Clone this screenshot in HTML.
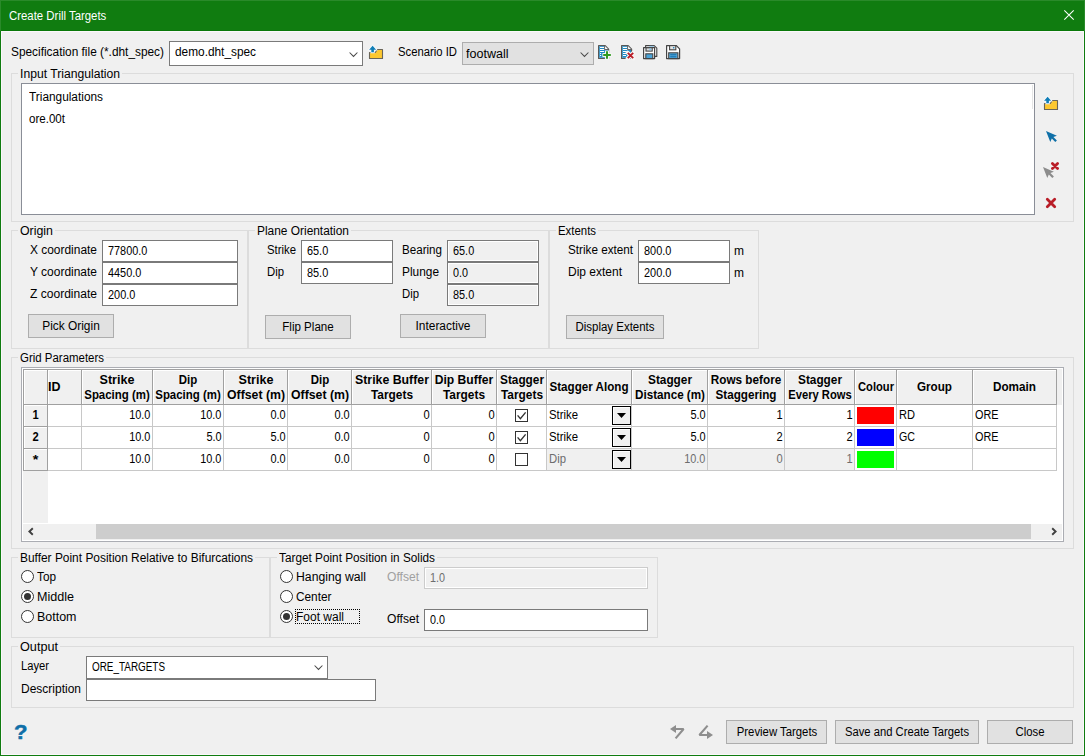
<!DOCTYPE html>
<html><head><meta charset="utf-8"><title>Create Drill Targets</title>
<style>
html,body{margin:0;padding:0;width:1085px;height:756px;overflow:hidden;}
body{background:#f0f0f0;position:relative;
font-family:"Liberation Sans",sans-serif;font-size:12px;color:#000;}
div{position:absolute;box-sizing:border-box;}
.t{white-space:nowrap;line-height:14px;height:14px;transform-origin:0 0;}
svg{position:absolute;overflow:visible;}
</style></head>
<body>
<div style="left:0;top:0;width:1085px;height:756px;overflow:hidden;">
<div style="left:0px;top:0px;width:1085px;height:756px;background:#f0f0f0;border:1px solid #107c10;"></div>
<div style="left:0px;top:0px;width:1085px;height:31px;background:#107c10;"></div>
<div style="left:0px;top:0px;width:1085px;height:1px;background:#2a8a2a;"></div>
<div style="left:0px;top:0px;width:1px;height:31px;background:#2a8a2a;"></div>
<div style="left:1084px;top:0px;width:1px;height:31px;background:#2a8a2a;"></div>
<div style="left:1px;top:30px;width:1083px;height:1px;background:#097809;"></div>
<div style="left:1px;top:31px;width:1083px;height:724px;border:1px solid #fbf8fb;"></div>
<svg style="left:1064px;top:10px" width="10" height="10" viewBox="0 0 10 10"><path d="M0.3 0.3 L9.7 9.7 M9.7 0.3 L0.3 9.7" stroke="#fff" stroke-width="1.05" fill="none"/></svg>
<div style="left:169px;top:41px;width:194px;height:25px;background:#fff;border:1px solid #7a7a7a;"></div>
<svg style="left:349.3px;top:51.5px" width="9" height="6" viewBox="0 0 9 6"><path d="M0.6 0.5 L4.5 4.4 L8.4 0.5" stroke="#484848" stroke-width="1.05" fill="none"/></svg>
<div style="left:462px;top:42px;width:132px;height:23px;background:#e1e1e1;border:1px solid #adadad;"></div>
<svg style="left:580.3px;top:51.5px" width="9" height="6" viewBox="0 0 9 6"><path d="M0.6 0.5 L4.5 4.4 L8.4 0.5" stroke="#484848" stroke-width="1.05" fill="none"/></svg>
<div style="left:11px;top:73px;width:1063px;height:149px;border:1px solid #dcdcdc;"></div>
<div style="left:18px;top:67px;width:104px;height:13px;background:#f0f0f0;"></div>
<div style="left:21px;top:83px;width:1014px;height:132px;background:#fff;border:1px solid #8a8e97;"></div>
<div style="left:1032px;top:85px;width:1px;height:24px;background:#e5e5e5;"></div>
<div style="left:11px;top:230px;width:237px;height:119px;border:1px solid #dcdcdc;"></div>
<div style="left:18px;top:224px;width:37px;height:13px;background:#f0f0f0;"></div>
<div style="left:102px;top:240px;width:136px;height:22px;background:#fff;border:1px solid #7a7a7a;"></div>
<div style="left:102px;top:262px;width:136px;height:22px;background:#fff;border:1px solid #7a7a7a;"></div>
<div style="left:102px;top:284px;width:136px;height:22px;background:#fff;border:1px solid #7a7a7a;"></div>
<div style="left:28px;top:314px;width:86px;height:24px;background:#e1e1e1;border:1px solid #adadad;"></div>
<div style="left:248px;top:230px;width:301px;height:119px;border:1px solid #dcdcdc;"></div>
<div style="left:255px;top:224px;width:96px;height:13px;background:#f0f0f0;"></div>
<div style="left:301px;top:240px;width:92px;height:22px;background:#fff;border:1px solid #7a7a7a;"></div>
<div style="left:301px;top:262px;width:92px;height:22px;background:#fff;border:1px solid #7a7a7a;"></div>
<div style="left:447px;top:240px;width:92px;height:22px;background:#f0f0f0;border:1px solid #7a7a7a;box-shadow:inset 0 0 0 1px #fff;"></div>
<div style="left:447px;top:262px;width:92px;height:22px;background:#f0f0f0;border:1px solid #7a7a7a;box-shadow:inset 0 0 0 1px #fff;"></div>
<div style="left:447px;top:284px;width:92px;height:22px;background:#f0f0f0;border:1px solid #7a7a7a;box-shadow:inset 0 0 0 1px #fff;"></div>
<div style="left:265px;top:315px;width:86px;height:24px;background:#e1e1e1;border:1px solid #adadad;"></div>
<div style="left:400px;top:314px;width:86px;height:24px;background:#e1e1e1;border:1px solid #adadad;"></div>
<div style="left:549px;top:230px;width:210px;height:119px;border:1px solid #dcdcdc;"></div>
<div style="left:556px;top:224px;width:42px;height:13px;background:#f0f0f0;"></div>
<div style="left:638px;top:240px;width:92px;height:22px;background:#fff;border:1px solid #7a7a7a;"></div>
<div style="left:638px;top:262px;width:92px;height:22px;background:#fff;border:1px solid #7a7a7a;"></div>
<div style="left:566px;top:315px;width:98px;height:24px;background:#e1e1e1;border:1px solid #adadad;"></div>
<div style="left:11px;top:357px;width:1063px;height:192px;border:1px solid #dcdcdc;"></div>
<div style="left:18px;top:351px;width:88px;height:13px;background:#f0f0f0;"></div>
<div style="left:21px;top:367px;width:1043px;height:175px;background:#fff;border:1px solid #abadb3;"></div>
<div style="left:23px;top:369px;width:1039px;height:36px;background:#f0f0f0;"></div>
<div style="left:23px;top:405px;width:25px;height:118px;background:#f0f0f0;"></div>
<div style="left:23px;top:369px;width:1034px;height:1px;background:#a0a0a0;"></div>
<div style="left:23px;top:369px;width:1px;height:102px;background:#a0a0a0;"></div>
<div style="left:23px;top:404px;width:1034px;height:1px;background:#a0a0a0;"></div>
<div style="left:48px;top:426px;width:1009px;height:1px;background:#c8c8c8;"></div>
<div style="left:23px;top:426px;width:25px;height:1px;background:#a0a0a0;"></div>
<div style="left:48px;top:448px;width:1009px;height:1px;background:#c8c8c8;"></div>
<div style="left:23px;top:448px;width:25px;height:1px;background:#a0a0a0;"></div>
<div style="left:48px;top:470px;width:1009px;height:1px;background:#c8c8c8;"></div>
<div style="left:23px;top:470px;width:25px;height:1px;background:#a0a0a0;"></div>
<div style="left:47px;top:369px;width:1px;height:36px;background:#a0a0a0;"></div>
<div style="left:47px;top:405px;width:1px;height:66px;background:#a0a0a0;"></div>
<div style="left:24px;top:370px;width:23px;height:1px;background:#fff;"></div>
<div style="left:24px;top:370px;width:1px;height:34px;background:#fff;"></div>
<div style="left:81px;top:369px;width:1px;height:36px;background:#a0a0a0;"></div>
<div style="left:81px;top:405px;width:1px;height:66px;background:#c8c8c8;"></div>
<div style="left:48px;top:370px;width:33px;height:1px;background:#fff;"></div>
<div style="left:48px;top:370px;width:1px;height:34px;background:#fff;"></div>
<div style="left:152px;top:369px;width:1px;height:36px;background:#a0a0a0;"></div>
<div style="left:152px;top:405px;width:1px;height:66px;background:#c8c8c8;"></div>
<div style="left:82px;top:370px;width:70px;height:1px;background:#fff;"></div>
<div style="left:82px;top:370px;width:1px;height:34px;background:#fff;"></div>
<div style="left:223px;top:369px;width:1px;height:36px;background:#a0a0a0;"></div>
<div style="left:223px;top:405px;width:1px;height:66px;background:#c8c8c8;"></div>
<div style="left:153px;top:370px;width:70px;height:1px;background:#fff;"></div>
<div style="left:153px;top:370px;width:1px;height:34px;background:#fff;"></div>
<div style="left:287px;top:369px;width:1px;height:36px;background:#a0a0a0;"></div>
<div style="left:287px;top:405px;width:1px;height:66px;background:#c8c8c8;"></div>
<div style="left:224px;top:370px;width:63px;height:1px;background:#fff;"></div>
<div style="left:224px;top:370px;width:1px;height:34px;background:#fff;"></div>
<div style="left:351px;top:369px;width:1px;height:36px;background:#a0a0a0;"></div>
<div style="left:351px;top:405px;width:1px;height:66px;background:#c8c8c8;"></div>
<div style="left:288px;top:370px;width:63px;height:1px;background:#fff;"></div>
<div style="left:288px;top:370px;width:1px;height:34px;background:#fff;"></div>
<div style="left:431px;top:369px;width:1px;height:36px;background:#a0a0a0;"></div>
<div style="left:431px;top:405px;width:1px;height:66px;background:#c8c8c8;"></div>
<div style="left:352px;top:370px;width:79px;height:1px;background:#fff;"></div>
<div style="left:352px;top:370px;width:1px;height:34px;background:#fff;"></div>
<div style="left:496px;top:369px;width:1px;height:36px;background:#a0a0a0;"></div>
<div style="left:496px;top:405px;width:1px;height:66px;background:#c8c8c8;"></div>
<div style="left:432px;top:370px;width:64px;height:1px;background:#fff;"></div>
<div style="left:432px;top:370px;width:1px;height:34px;background:#fff;"></div>
<div style="left:546px;top:369px;width:1px;height:36px;background:#a0a0a0;"></div>
<div style="left:546px;top:405px;width:1px;height:66px;background:#c8c8c8;"></div>
<div style="left:497px;top:370px;width:49px;height:1px;background:#fff;"></div>
<div style="left:497px;top:370px;width:1px;height:34px;background:#fff;"></div>
<div style="left:631px;top:369px;width:1px;height:36px;background:#a0a0a0;"></div>
<div style="left:631px;top:405px;width:1px;height:66px;background:#c8c8c8;"></div>
<div style="left:547px;top:370px;width:84px;height:1px;background:#fff;"></div>
<div style="left:547px;top:370px;width:1px;height:34px;background:#fff;"></div>
<div style="left:707px;top:369px;width:1px;height:36px;background:#a0a0a0;"></div>
<div style="left:707px;top:405px;width:1px;height:66px;background:#c8c8c8;"></div>
<div style="left:632px;top:370px;width:75px;height:1px;background:#fff;"></div>
<div style="left:632px;top:370px;width:1px;height:34px;background:#fff;"></div>
<div style="left:784px;top:369px;width:1px;height:36px;background:#a0a0a0;"></div>
<div style="left:784px;top:405px;width:1px;height:66px;background:#c8c8c8;"></div>
<div style="left:708px;top:370px;width:76px;height:1px;background:#fff;"></div>
<div style="left:708px;top:370px;width:1px;height:34px;background:#fff;"></div>
<div style="left:854px;top:369px;width:1px;height:36px;background:#a0a0a0;"></div>
<div style="left:854px;top:405px;width:1px;height:66px;background:#c8c8c8;"></div>
<div style="left:785px;top:370px;width:69px;height:1px;background:#fff;"></div>
<div style="left:785px;top:370px;width:1px;height:34px;background:#fff;"></div>
<div style="left:896px;top:369px;width:1px;height:36px;background:#a0a0a0;"></div>
<div style="left:896px;top:405px;width:1px;height:66px;background:#c8c8c8;"></div>
<div style="left:855px;top:370px;width:41px;height:1px;background:#fff;"></div>
<div style="left:855px;top:370px;width:1px;height:34px;background:#fff;"></div>
<div style="left:972px;top:369px;width:1px;height:36px;background:#a0a0a0;"></div>
<div style="left:972px;top:405px;width:1px;height:66px;background:#c8c8c8;"></div>
<div style="left:897px;top:370px;width:75px;height:1px;background:#fff;"></div>
<div style="left:897px;top:370px;width:1px;height:34px;background:#fff;"></div>
<div style="left:1056px;top:369px;width:1px;height:36px;background:#a0a0a0;"></div>
<div style="left:1056px;top:405px;width:1px;height:66px;background:#c8c8c8;"></div>
<div style="left:973px;top:370px;width:83px;height:1px;background:#fff;"></div>
<div style="left:973px;top:370px;width:1px;height:34px;background:#fff;"></div>
<div style="left:24px;top:405px;width:23px;height:1px;background:#fff;"></div>
<div style="left:24px;top:405px;width:1px;height:21px;background:#fff;"></div>
<div style="left:24px;top:427px;width:23px;height:1px;background:#fff;"></div>
<div style="left:24px;top:427px;width:1px;height:21px;background:#fff;"></div>
<div style="left:24px;top:449px;width:23px;height:1px;background:#fff;"></div>
<div style="left:24px;top:449px;width:1px;height:21px;background:#fff;"></div>
<div style="left:515px;top:409px;width:13px;height:13px;background:#fff;border:1px solid #333;"></div>
<svg style="left:515px;top:409px" width="13" height="13" viewBox="0 0 13 13"><path d="M2.6 6.4 L5.4 9.6 L10.6 3.4" stroke="#333" stroke-width="1.4" fill="none"/></svg>
<div style="left:612px;top:406px;width:19px;height:19px;background:#f0f0f0;border:1px solid #000;"></div>
<div style="left:613px;top:407px;width:17px;height:1px;background:#fff;"></div>
<div style="left:613px;top:407px;width:1px;height:17px;background:#fff;"></div>
<svg style="left:617px;top:413px" width="9" height="5" viewBox="0 0 9 5"><path d="M0 0 L9 0 L4.5 5 Z" fill="#000"/></svg>
<div style="left:857px;top:407px;width:37px;height:17px;background:#ff0000;"></div>
<div style="left:515px;top:431px;width:13px;height:13px;background:#fff;border:1px solid #333;"></div>
<svg style="left:515px;top:431px" width="13" height="13" viewBox="0 0 13 13"><path d="M2.6 6.4 L5.4 9.6 L10.6 3.4" stroke="#333" stroke-width="1.4" fill="none"/></svg>
<div style="left:612px;top:428px;width:19px;height:19px;background:#f0f0f0;border:1px solid #000;"></div>
<div style="left:613px;top:429px;width:17px;height:1px;background:#fff;"></div>
<div style="left:613px;top:429px;width:1px;height:17px;background:#fff;"></div>
<svg style="left:617px;top:435px" width="9" height="5" viewBox="0 0 9 5"><path d="M0 0 L9 0 L4.5 5 Z" fill="#000"/></svg>
<div style="left:857px;top:429px;width:37px;height:17px;background:#0000ff;"></div>
<div style="left:515px;top:453px;width:13px;height:13px;background:#fff;border:1px solid #333;"></div>
<div style="left:547px;top:449px;width:84px;height:21px;background:#f0f0f0;"></div>
<div style="left:612px;top:450px;width:19px;height:19px;background:#f0f0f0;border:1px solid #000;"></div>
<div style="left:613px;top:451px;width:17px;height:1px;background:#fff;"></div>
<div style="left:613px;top:451px;width:1px;height:17px;background:#fff;"></div>
<svg style="left:617px;top:457px" width="9" height="5" viewBox="0 0 9 5"><path d="M0 0 L9 0 L4.5 5 Z" fill="#000"/></svg>
<div style="left:632px;top:449px;width:75px;height:21px;background:#f0f0f0;"></div>
<div style="left:708px;top:449px;width:76px;height:21px;background:#f0f0f0;"></div>
<div style="left:785px;top:449px;width:69px;height:21px;background:#f0f0f0;"></div>
<div style="left:857px;top:451px;width:37px;height:17px;background:#00ff00;"></div>
<div style="left:23px;top:524px;width:1039px;height:16px;background:#f0f0f0;"></div>
<div style="left:96px;top:524px;width:935px;height:15px;background:#cdcdcd;"></div>
<svg style="left:27px;top:527px" width="8" height="9" viewBox="0 0 8 9"><path d="M5.8 1.3 L2.4 4.5 L5.8 7.7" stroke="#404040" stroke-width="1.9" fill="none"/></svg>
<svg style="left:1050px;top:527px" width="8" height="9" viewBox="0 0 8 9"><path d="M2.2 1.3 L5.6 4.5 L2.2 7.7" stroke="#404040" stroke-width="1.9" fill="none"/></svg>
<div style="left:11px;top:557px;width:259px;height:81px;border:1px solid #dcdcdc;"></div>
<div style="left:18px;top:551px;width:237px;height:13px;background:#f0f0f0;"></div>
<div style="left:21.0px;top:570.0px;width:13px;height:13px;border:1px solid #333;border-radius:50%;background:#fff;"></div>
<div style="left:21.0px;top:590.0px;width:13px;height:13px;border:1px solid #333;border-radius:50%;background:#fff;"></div>
<div style="left:24.0px;top:593.0px;width:7px;height:7px;border-radius:50%;background:#333;"></div>
<div style="left:21.0px;top:610.0px;width:13px;height:13px;border:1px solid #333;border-radius:50%;background:#fff;"></div>
<div style="left:270px;top:557px;width:388px;height:81px;border:1px solid #dcdcdc;"></div>
<div style="left:277px;top:551px;width:160px;height:13px;background:#f0f0f0;"></div>
<div style="left:280.0px;top:570.0px;width:13px;height:13px;border:1px solid #333;border-radius:50%;background:#fff;"></div>
<div style="left:280.0px;top:590.0px;width:13px;height:13px;border:1px solid #333;border-radius:50%;background:#fff;"></div>
<div style="left:280.0px;top:610.0px;width:13px;height:13px;border:1px solid #333;border-radius:50%;background:#fff;"></div>
<div style="left:283.0px;top:613.0px;width:7px;height:7px;border-radius:50%;background:#333;"></div>
<div style="left:295px;top:609px;width:65px;height:15px;border:1px dotted #000;"></div>
<div style="left:424px;top:567px;width:224px;height:22px;background:#f0f0f0;border:1px solid #cccccc;box-shadow:inset 0 0 0 1px #fff;"></div>
<div style="left:424px;top:609px;width:224px;height:22px;background:#fff;border:1px solid #7a7a7a;"></div>
<div style="left:11px;top:646px;width:1063px;height:62px;border:1px solid #dcdcdc;"></div>
<div style="left:18px;top:640px;width:42px;height:13px;background:#f0f0f0;"></div>
<div style="left:86px;top:656px;width:242px;height:23px;background:#fff;border:1px solid #7a7a7a;"></div>
<svg style="left:314.3px;top:664.5px" width="9" height="6" viewBox="0 0 9 6"><path d="M0.6 0.5 L4.5 4.4 L8.4 0.5" stroke="#484848" stroke-width="1.05" fill="none"/></svg>
<div style="left:86px;top:679px;width:290px;height:22px;background:#fff;border:1px solid #7a7a7a;"></div>
<div style="left:726px;top:720px;width:101px;height:24px;background:#e1e1e1;border:1px solid #adadad;"></div>
<div style="left:835px;top:720px;width:144px;height:24px;background:#e1e1e1;border:1px solid #adadad;"></div>
<div style="left:987px;top:720px;width:86px;height:24px;background:#e1e1e1;border:1px solid #adadad;"></div>
<svg style="left:369px;top:45px" width="16" height="16" viewBox="0 0 16 16"><path d="M0.5 7.5 L6.3 7.5 L8.3 4.5 L13.5 4.5 L13.5 13.5 L0.5 13.5 Z" fill="#fdc830" stroke="#6a6558" stroke-width="1.1" stroke-linejoin="round"/><path d="M3.6 0.2 L7.6 4.9 L5.1 4.9 L5.1 7.6 L2.1 7.6 L2.1 4.9 L-0.4 4.9 Z" fill="#fff" stroke="#f4f8fb" stroke-width="1.2"/><path d="M3.6 0.7 L7.1 4.7 L4.9 4.7 L4.9 7.3 L2.3 7.3 L2.3 4.7 L0.1 4.7 Z" fill="#0f7db6"/></svg>
<svg style="left:598px;top:45px" width="16" height="16" viewBox="0 0 16 16"><path d="M0.6 0.6 L7.2 0.6 L10.6 4.2 L10.6 13.4 L0.6 13.4 Z" fill="#fff" stroke="#585858" stroke-width="1.2" stroke-linejoin="round"/><path d="M1.2 1.2 L6.4 1.2 L6.4 4.8 L10 4.8 L10 12.8 L1.2 12.8 Z" fill="#1f8ac4"/><path d="M6.6 1.0 L6.6 4.5 L10.2 4.5" fill="#fff" stroke="#585858" stroke-width="0.9"/><rect x="2" y="2" width="4" height="1" fill="#fff"/><rect x="2" y="4" width="4" height="1" fill="#fff"/><rect x="2" y="6" width="4" height="1" fill="#fff"/><rect x="2" y="8" width="1.2" height="1" fill="#fff"/><rect x="2" y="10" width="1.2" height="1" fill="#fff"/><path d="M9 5.4 L9 14.6 M4.4 10 L13.6 10" stroke="#f6f6f6" stroke-width="4.2" fill="none"/><path d="M9 6.2 L9 13.8 M5.2 10 L12.8 10" stroke="#2f9a1f" stroke-width="2" fill="none"/></svg>
<svg style="left:621px;top:45px" width="16" height="16" viewBox="0 0 16 16"><path d="M0.6 0.6 L7.2 0.6 L10.6 4.2 L10.6 13.4 L0.6 13.4 Z" fill="#fff" stroke="#585858" stroke-width="1.2" stroke-linejoin="round"/><path d="M1.2 1.2 L6.4 1.2 L6.4 4.8 L10 4.8 L10 12.8 L1.2 12.8 Z" fill="#1f8ac4"/><path d="M6.6 1.0 L6.6 4.5 L10.2 4.5" fill="#fff" stroke="#585858" stroke-width="0.9"/><rect x="2" y="2" width="4" height="1" fill="#fff"/><rect x="2" y="4" width="4" height="1" fill="#fff"/><rect x="2" y="6" width="3.6" height="1" fill="#fff"/><rect x="2" y="8" width="3" height="1" fill="#fff"/><rect x="2" y="10" width="3" height="1" fill="#fff"/><path d="M6.6 7.6 L12.4 13.4 M12.4 7.6 L6.6 13.4" stroke="#f6f6f6" stroke-width="4" fill="none" stroke-linecap="round"/><path d="M6.8 7.8 L12.2 13.2 M12.2 7.8 L6.8 13.2" stroke="#b91d27" stroke-width="1.9" fill="none"/></svg>
<svg style="left:643px;top:45px" width="16" height="16" viewBox="0 0 16 16"><path d="M2.6 0.6 L11.2 0.6 L13.799999999999999 3.2 L13.799999999999999 11.4 L2.6 11.4 Z" fill="#fff" stroke="#444" stroke-width="1.1" stroke-linejoin="round"/><rect x="6.2" y="0.9" width="4.6" height="2.2" fill="#9cc9e6"/><path d="M0.6 2.6 L11.59 2.6 L11.6 2.61 L11.6 13.6 L0.6 13.6 Z" fill="#fff" stroke="#444" stroke-width="1.2" stroke-linejoin="round"/><rect x="3" y="2.8" width="6.2" height="3.3" fill="#d9dde0" stroke="#444" stroke-width="1.1"/><rect x="6.4" y="3.5" width="2" height="1.9" fill="#8fc3e4"/><rect x="2.8" y="8.8" width="7" height="4.8" fill="#4ba4d8" stroke="#444" stroke-width="1.1"/></svg>
<svg style="left:666px;top:45px" width="16" height="16" viewBox="0 0 16 16"><path d="M0.6 0.6 L10.399999999999999 0.6 L13.6 3.8000000000000003 L13.6 13.6 L0.6 13.6 Z" fill="#fff" stroke="#444" stroke-width="1.2" stroke-linejoin="round"/><rect x="3.6" y="0.6" width="6.2" height="4.2" fill="#e4e4e4" stroke="#444" stroke-width="1.1"/><circle cx="7.7" cy="2.7" r="0.8" fill="#0f7db6"/><rect x="2.7" y="7.8" width="9.2" height="5.8" fill="#58addf" stroke="#444" stroke-width="1.1"/><rect x="4.2" y="9.3" width="6.2" height="1" fill="#0a69a6"/><rect x="4.2" y="11.3" width="6.2" height="1" fill="#0a69a6"/></svg>
<svg style="left:1044px;top:96px" width="16" height="16" viewBox="0 0 16 16"><path d="M0.5 7.5 L6.3 7.5 L8.3 4.5 L13.5 4.5 L13.5 13.5 L0.5 13.5 Z" fill="#fdc830" stroke="#6a6558" stroke-width="1.1" stroke-linejoin="round"/><path d="M3.6 0.2 L7.6 4.9 L5.1 4.9 L5.1 7.6 L2.1 7.6 L2.1 4.9 L-0.4 4.9 Z" fill="#fff" stroke="#f4f8fb" stroke-width="1.2"/><path d="M3.6 0.7 L7.1 4.7 L4.9 4.7 L4.9 7.3 L2.3 7.3 L2.3 4.7 L0.1 4.7 Z" fill="#0f7db6"/></svg>
<svg style="left:1046px;top:131px" width="14" height="14" viewBox="0 0 14 14"><path d="M0 0 L10.9 4.7 L7.4 6 L10.9 9.4 L9.3 11 L5.8 7.5 L4.3 10.9 Z" fill="#0f70a8"/></svg>
<svg style="left:1043.2px;top:167px" width="14" height="14" viewBox="0 0 14 14"><path d="M0 0 L10.9 4.7 L7.4 6 L10.9 9.4 L9.3 11 L5.8 7.5 L4.3 10.9 Z" fill="#8c8c8c"/></svg>
<svg style="left:1047px;top:158px" width="16" height="16" viewBox="0 0 16 16"><path d="M5.4 5.4 L10.6 10.6 M10.6 5.4 L5.4 10.6" stroke="#b91d27" stroke-width="2.8" stroke-linecap="round" fill="none"/></svg>
<svg style="left:1043px;top:195px" width="16" height="16" viewBox="0 0 16 16"><path d="M4.3 4.3 L11.7 11.7 M11.7 4.3 L4.3 11.7" stroke="#b91d27" stroke-width="2.8" stroke-linecap="round" fill="none"/></svg>
<svg style="left:668px;top:722px" width="20" height="20" viewBox="0 0 20 20"><path d="M2 7 L8 3 L8 11 Z" fill="#8e8e8e"/><path d="M7.5 7 L15.6 7 L7.6 16.4" stroke="#8e8e8e" stroke-width="2.1" fill="none" stroke-linejoin="bevel"/></svg>
<svg style="left:697px;top:722px" width="20" height="20" viewBox="0 0 20 20"><path d="M16 13 L10 9 L10 17 Z" fill="#8e8e8e"/><path d="M10.5 13 L2.4 13 L10.6 3.6" stroke="#8e8e8e" stroke-width="2.1" fill="none" stroke-linejoin="bevel"/></svg>
<div class="t" style="left:9.2px;top:8.84px;transform:scaleX(0.9494);color:#fff;">Create Drill Targets</div>
<div class="t" style="left:11px;top:44.84px;transform:scaleX(0.9887);">Specification file (*.dht_spec)</div>
<div class="t" style="left:175px;top:44.84px;transform:scaleX(0.9871);">demo.dht_spec</div>
<div class="t" style="left:398px;top:44.84px;transform:scaleX(0.9409);">Scenario ID</div>
<div class="t" style="left:466px;top:46.84px;transform:scaleX(1.0445);">footwall</div>
<div class="t" style="left:20px;top:66.84px;transform:scaleX(1.0127);">Input Triangulation</div>
<div class="t" style="left:29px;top:89.84px;transform:scaleX(0.9875);">Triangulations</div>
<div class="t" style="left:29px;top:111.84px;transform:scaleX(0.9636);">ore.00t</div>
<div class="t" style="left:20px;top:223.84px;transform:scaleX(1.0307);">Origin</div>
<div class="t" style="left:30px;top:242.84px;transform:scaleX(0.9942);">X coordinate</div>
<div class="t" style="left:30px;top:264.84px;transform:scaleX(0.9974);">Y coordinate</div>
<div class="t" style="left:30px;top:286.84px;transform:scaleX(1.0045);">Z coordinate</div>
<div class="t" style="left:108px;top:244.34px;transform:scaleX(0.9057);">77800.0</div>
<div class="t" style="left:108px;top:266.34px;transform:scaleX(0.9073);">4450.0</div>
<div class="t" style="left:108px;top:288.34px;transform:scaleX(0.9091);">200.0</div>
<div class="t" style="left:2.0px;width:138.0px;text-align:center;top:318.84px;transform-origin:50% 0;transform:scaleX(0.9911);">Pick Origin</div>
<div class="t" style="left:257px;top:223.84px;transform:scaleX(0.9921);">Plane Orientation</div>
<div class="t" style="left:267px;top:242.84px;transform:scaleX(0.9450);">Strike</div>
<div class="t" style="left:267px;top:264.84px;transform:scaleX(0.9436);">Dip</div>
<div class="t" style="left:307px;top:244.34px;transform:scaleX(0.9076);">65.0</div>
<div class="t" style="left:307px;top:266.34px;transform:scaleX(0.9076);">85.0</div>
<div class="t" style="left:402px;top:242.84px;transform:scaleX(0.9668);">Bearing</div>
<div class="t" style="left:402px;top:264.84px;transform:scaleX(0.9900);">Plunge</div>
<div class="t" style="left:402px;top:286.84px;transform:scaleX(0.9436);">Dip</div>
<div class="t" style="left:453px;top:244.34px;transform:scaleX(0.9076);">65.0</div>
<div class="t" style="left:453px;top:266.34px;transform:scaleX(0.8989);">0.0</div>
<div class="t" style="left:453px;top:288.34px;transform:scaleX(0.9076);">85.0</div>
<div class="t" style="left:158.0px;width:300px;text-align:center;top:319.84px;transform-origin:50% 0;transform:scaleX(0.9649);">Flip Plane</div>
<div class="t" style="left:293.0px;width:300px;text-align:center;top:318.84px;transform-origin:50% 0;transform:scaleX(0.9935);">Interactive</div>
<div class="t" style="left:558px;top:223.84px;transform:scaleX(0.9493);">Extents</div>
<div class="t" style="left:568px;top:242.84px;transform:scaleX(0.9745);">Strike extent</div>
<div class="t" style="left:568px;top:264.84px;transform:scaleX(0.9994);">Dip extent</div>
<div class="t" style="left:644px;top:244.34px;transform:scaleX(0.9091);">800.0</div>
<div class="t" style="left:644px;top:266.34px;transform:scaleX(0.9091);">200.0</div>
<div class="t" style="left:734px;top:243.84px;">m</div>
<div class="t" style="left:734px;top:265.84px;">m</div>
<div class="t" style="left:465.0px;width:300px;text-align:center;top:319.84px;transform-origin:50% 0;transform:scaleX(0.9552);">Display Extents</div>
<div class="t" style="left:20px;top:350.84px;transform:scaleX(0.9542);">Grid Parameters</div>
<div class="t" style="left:48.3px;top:379.84px;transform:scaleX(1.0417);font-weight:bold;">ID</div>
<div class="t" style="left:2.0px;width:230.0px;text-align:center;top:372.84px;transform-origin:50% 0;transform:scaleX(1.0492);font-weight:bold;">Strike</div>
<div class="t" style="left:2.0px;width:230.0px;text-align:center;top:387.84px;transform-origin:50% 0;transform:scaleX(0.9538);font-weight:bold;">Spacing (m)</div>
<div class="t" style="left:38.0px;width:300px;text-align:center;top:372.84px;transform-origin:50% 0;transform:scaleX(0.9564);font-weight:bold;">Dip</div>
<div class="t" style="left:38.0px;width:300px;text-align:center;top:387.84px;transform-origin:50% 0;transform:scaleX(0.9538);font-weight:bold;">Spacing (m)</div>
<div class="t" style="left:105.5px;width:300px;text-align:center;top:372.84px;transform-origin:50% 0;transform:scaleX(1.0492);font-weight:bold;">Strike</div>
<div class="t" style="left:105.5px;width:300px;text-align:center;top:387.84px;transform-origin:50% 0;transform:scaleX(1.0234);font-weight:bold;">Offset (m)</div>
<div class="t" style="left:169.5px;width:300px;text-align:center;top:372.84px;transform-origin:50% 0;transform:scaleX(0.9564);font-weight:bold;">Dip</div>
<div class="t" style="left:169.5px;width:300px;text-align:center;top:387.84px;transform-origin:50% 0;transform:scaleX(1.0234);font-weight:bold;">Offset (m)</div>
<div class="t" style="left:241.5px;width:300px;text-align:center;top:372.84px;transform-origin:50% 0;transform:scaleX(1.0273);font-weight:bold;">Strike Buffer</div>
<div class="t" style="left:241.5px;width:300px;text-align:center;top:387.84px;transform-origin:50% 0;transform:scaleX(0.9890);font-weight:bold;">Targets</div>
<div class="t" style="left:314.0px;width:300px;text-align:center;top:372.84px;transform-origin:50% 0;transform:scaleX(1.0086);font-weight:bold;">Dip Buffer</div>
<div class="t" style="left:314.0px;width:300px;text-align:center;top:387.84px;transform-origin:50% 0;transform:scaleX(0.9890);font-weight:bold;">Targets</div>
<div class="t" style="left:371.5px;width:300px;text-align:center;top:372.84px;transform-origin:50% 0;transform:scaleX(0.9846);font-weight:bold;">Stagger</div>
<div class="t" style="left:371.5px;width:300px;text-align:center;top:387.84px;transform-origin:50% 0;transform:scaleX(0.9890);font-weight:bold;">Targets</div>
<div class="t" style="left:439.0px;width:300px;text-align:center;top:379.84px;transform-origin:50% 0;transform:scaleX(0.9686);font-weight:bold;">Stagger Along</div>
<div class="t" style="left:519.5px;width:300px;text-align:center;top:372.84px;transform-origin:50% 0;transform:scaleX(0.9846);font-weight:bold;">Stagger</div>
<div class="t" style="left:519.5px;width:300px;text-align:center;top:387.84px;transform-origin:50% 0;transform:scaleX(0.9718);font-weight:bold;">Distance (m)</div>
<div class="t" style="left:596.0px;width:300px;text-align:center;top:372.84px;transform-origin:50% 0;transform:scaleX(0.9790);font-weight:bold;">Rows before</div>
<div class="t" style="left:596.0px;width:300px;text-align:center;top:387.84px;transform-origin:50% 0;transform:scaleX(0.9733);font-weight:bold;">Staggering</div>
<div class="t" style="left:669.5px;width:300px;text-align:center;top:372.84px;transform-origin:50% 0;transform:scaleX(0.9846);font-weight:bold;">Stagger</div>
<div class="t" style="left:669.5px;width:300px;text-align:center;top:387.84px;transform-origin:50% 0;transform:scaleX(0.9332);font-weight:bold;">Every Rows</div>
<div class="t" style="left:725.5px;width:300px;text-align:center;top:379.84px;transform-origin:50% 0;transform:scaleX(0.9309);font-weight:bold;">Colour</div>
<div class="t" style="left:786.0px;width:297.0px;text-align:center;top:379.84px;transform-origin:50% 0;transform:scaleX(0.9722);font-weight:bold;">Group</div>
<div class="t" style="left:946.0px;width:137.0px;text-align:center;top:379.84px;transform-origin:50% 0;transform:scaleX(0.9769);font-weight:bold;">Domain</div>
<div class="t" style="left:2.0px;width:67.0px;text-align:center;top:407.84px;transform-origin:50% 0;transform:scaleX(0.9300);font-weight:bold;">1</div>
<div class="t" style="left:2.0px;width:67.0px;text-align:center;top:429.84px;transform-origin:50% 0;transform:scaleX(0.9300);font-weight:bold;">2</div>
<div class="t" style="left:2.0px;width:67.0px;text-align:center;top:452.54px;transform-origin:50% 0;transform:scaleX(1.1987);font-weight:bold;">*</div>
<div class="t" style="right:934.5px;top:407.84px;transform-origin:100% 0;transform:scaleX(0.9076);">10.0</div>
<div class="t" style="right:863.5px;top:407.84px;transform-origin:100% 0;transform:scaleX(0.9076);">10.0</div>
<div class="t" style="right:799.5px;top:407.84px;transform-origin:100% 0;transform:scaleX(0.9109);">0.0</div>
<div class="t" style="right:735.5px;top:407.84px;transform-origin:100% 0;transform:scaleX(0.9109);">0.0</div>
<div class="t" style="right:655.5px;top:407.84px;transform-origin:100% 0;transform:scaleX(0.9271);">0</div>
<div class="t" style="right:590.5px;top:407.84px;transform-origin:100% 0;transform:scaleX(0.9271);">0</div>
<div class="t" style="left:549px;top:407.84px;transform:scaleX(0.9450);">Strike</div>
<div class="t" style="right:379.5px;top:407.84px;transform-origin:100% 0;transform:scaleX(0.9109);">5.0</div>
<div class="t" style="right:302.5px;top:407.84px;transform-origin:100% 0;transform:scaleX(0.9271);">1</div>
<div class="t" style="right:232.5px;top:407.84px;transform-origin:100% 0;transform:scaleX(0.9271);">1</div>
<div class="t" style="left:898.8px;top:407.84px;transform:scaleX(0.9225);">RD</div>
<div class="t" style="left:974.8px;top:407.84px;transform:scaleX(0.9033);">ORE</div>
<div class="t" style="right:934.5px;top:429.84px;transform-origin:100% 0;transform:scaleX(0.9076);">10.0</div>
<div class="t" style="right:863.5px;top:429.84px;transform-origin:100% 0;transform:scaleX(0.9109);">5.0</div>
<div class="t" style="right:799.5px;top:429.84px;transform-origin:100% 0;transform:scaleX(0.9109);">5.0</div>
<div class="t" style="right:735.5px;top:429.84px;transform-origin:100% 0;transform:scaleX(0.9109);">0.0</div>
<div class="t" style="right:655.5px;top:429.84px;transform-origin:100% 0;transform:scaleX(0.9271);">0</div>
<div class="t" style="right:590.5px;top:429.84px;transform-origin:100% 0;transform:scaleX(0.9271);">0</div>
<div class="t" style="left:549px;top:429.84px;transform:scaleX(0.9450);">Strike</div>
<div class="t" style="right:379.5px;top:429.84px;transform-origin:100% 0;transform:scaleX(0.9109);">5.0</div>
<div class="t" style="right:302.5px;top:429.84px;transform-origin:100% 0;transform:scaleX(0.9271);">2</div>
<div class="t" style="right:232.5px;top:429.84px;transform-origin:100% 0;transform:scaleX(0.9271);">2</div>
<div class="t" style="left:898.8px;top:429.84px;transform:scaleX(0.8889);">GC</div>
<div class="t" style="left:974.8px;top:429.84px;transform:scaleX(0.9033);">ORE</div>
<div class="t" style="right:934.5px;top:451.84px;transform-origin:100% 0;transform:scaleX(0.9076);">10.0</div>
<div class="t" style="right:863.5px;top:451.84px;transform-origin:100% 0;transform:scaleX(0.9076);">10.0</div>
<div class="t" style="right:799.5px;top:451.84px;transform-origin:100% 0;transform:scaleX(0.9109);">0.0</div>
<div class="t" style="right:735.5px;top:451.84px;transform-origin:100% 0;transform:scaleX(0.9109);">0.0</div>
<div class="t" style="right:655.5px;top:451.84px;transform-origin:100% 0;transform:scaleX(0.9271);">0</div>
<div class="t" style="right:590.5px;top:451.84px;transform-origin:100% 0;transform:scaleX(0.9271);">0</div>
<div class="t" style="left:549px;top:451.84px;transform:scaleX(0.9436);color:#6d6d6d;">Dip</div>
<div class="t" style="right:379.5px;top:451.84px;transform-origin:100% 0;transform:scaleX(0.9076);color:#6d6d6d;">10.0</div>
<div class="t" style="right:302.5px;top:451.84px;transform-origin:100% 0;transform:scaleX(0.9271);color:#6d6d6d;">0</div>
<div class="t" style="right:232.5px;top:451.84px;transform-origin:100% 0;transform:scaleX(0.9271);color:#6d6d6d;">1</div>
<div class="t" style="left:20px;top:550.84px;transform:scaleX(0.9933);">Buffer Point Position Relative to Bifurcations</div>
<div class="t" style="left:37px;top:569.84px;transform:scaleX(0.9814);">Top</div>
<div class="t" style="left:37px;top:589.84px;transform:scaleX(1.0464);">Middle</div>
<div class="t" style="left:37px;top:609.84px;transform:scaleX(1.0390);">Bottom</div>
<div class="t" style="left:279px;top:550.84px;transform:scaleX(0.9826);">Target Point Position in Solids</div>
<div class="t" style="left:296px;top:569.84px;transform:scaleX(1.0186);">Hanging wall</div>
<div class="t" style="left:296px;top:589.84px;transform:scaleX(0.9853);">Center</div>
<div class="t" style="left:296px;top:609.84px;transform:scaleX(0.9993);">Foot wall</div>
<div class="t" style="left:387px;top:569.84px;transform:scaleX(1.0064);color:#a0a0a0;">Offset</div>
<div class="t" style="left:430px;top:571.34px;transform:scaleX(0.8989);color:#6d6d6d;">1.0</div>
<div class="t" style="left:387px;top:611.84px;transform:scaleX(1.0064);">Offset</div>
<div class="t" style="left:430px;top:613.34px;transform:scaleX(0.8989);">0.0</div>
<div class="t" style="left:20px;top:639.84px;transform:scaleX(1.0546);">Output</div>
<div class="t" style="left:21px;top:658.84px;transform:scaleX(0.9324);">Layer</div>
<div class="t" style="left:92.4px;top:659.84px;transform:scaleX(0.8252);">ORE_TARGETS</div>
<div class="t" style="left:21px;top:681.84px;transform:scaleX(0.9995);">Description</div>
<div class="t" style="left:14px;top:725.24px;transform:scaleX(1.1324);color:#0f6fa8;font-weight:bold;font-size:19.5px;-webkit-text-stroke:0.5px #0f6fa8;">?</div>
<div class="t" style="left:626.5px;width:300px;text-align:center;top:724.84px;transform-origin:50% 0;transform:scaleX(0.9453);">Preview Targets</div>
<div class="t" style="left:757.0px;width:300px;text-align:center;top:724.84px;transform-origin:50% 0;transform:scaleX(0.9356);">Save and Create Targets</div>
<div class="t" style="left:977.0px;width:106.0px;text-align:center;top:724.84px;transform-origin:50% 0;transform:scaleX(0.9450);">Close</div>
</div>
</body></html>
